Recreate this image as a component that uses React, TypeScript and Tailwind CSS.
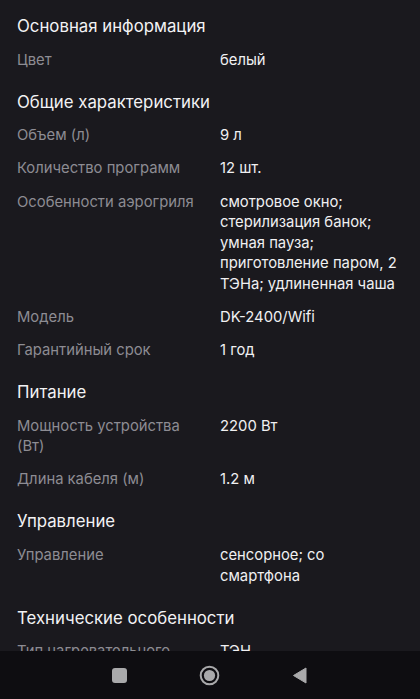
import React from "react";

type Row = { label: string[] | string; value: string[] | string };
type Section = { title: string; rows: Row[] };

const sections: Section[] = [
  { title: "Основная информация", rows: [{ label: "Цвет", value: "белый" }] },
  {
    title: "Общие характеристики",
    rows: [
      { label: "Объем (л)", value: "9 л" },
      { label: "Количество программ", value: "12 шт." },
      {
        label: "Особенности аэрогриля",
        value: [
          "смотровое окно;",
          "стерилизация банок;",
          "умная пауза;",
          "приготовление паром, 2",
          "ТЭНа; удлиненная чаша",
        ],
      },
      { label: "Модель", value: "DK-2400/Wifi" },
      { label: "Гарантийный срок", value: "1 год" },
    ],
  },
  {
    title: "Питание",
    rows: [
      { label: ["Мощность устройства", "(Вт)"], value: "2200 Вт" },
      { label: "Длина кабеля (м)", value: "1.2 м" },
    ],
  },
  {
    title: "Управление",
    rows: [{ label: "Управление", value: ["сенсорное; со", "смартфона"] }],
  },
  {
    title: "Технические особенности",
    rows: [{ label: "Тип нагревательного", value: "ТЭН" }],
  },
];

const lines = (v: string[] | string) => (Array.isArray(v) ? v : [v]);

export default function App() {
  return (
    <div
      className="h-[699px] w-[420px] flex flex-col overflow-hidden bg-[#1a191e]"
      style={{ fontFamily: "Inter, 'Noto Sans', sans-serif" }}
    >
      <div className="flex-1 overflow-hidden pt-[14px] px-[17px] flex flex-col gap-[19.4px]">
        {sections.map((s) => (
          <div key={s.title} className="flex flex-col">
            <div className="text-[16.8px] leading-[24px] text-[#f2f2f4]">{s.title}</div>
            <div className="mt-[11.7px] flex flex-col gap-[12.5px]">
              {s.rows.map((r, i) => (
                <div key={i} className="flex text-[14.8px] leading-[20.6px]">
                  <div className="w-[203px] shrink-0 text-[#8d8c93]">
                    {lines(r.label).map((l) => (
                      <div key={l}>{l}</div>
                    ))}
                  </div>
                  <div className="flex-1 text-[#f0f0f2]">
                    {lines(r.value).map((l) => (
                      <div key={l}>{l}</div>
                    ))}
                  </div>
                </div>
              ))}
            </div>
          </div>
        ))}
      </div>
      <div className="h-[48px] shrink-0 bg-[#0e0d11] flex items-center justify-center gap-[72px] pr-[2px]">
        <div className="w-[15px] h-[15px] rounded-[3px] bg-[#a9a9ab]" />
        <svg width="21" height="21" viewBox="0 0 21 21">
          <circle cx="10.5" cy="10.5" r="8.8" fill="none" stroke="#a9a9ab" strokeWidth="2" />
          <circle cx="10.5" cy="10.5" r="5.6" fill="#a9a9ab" />
        </svg>
        <svg width="15" height="17" viewBox="0 0 15 17">
          <path d="M14 1 L1.5 8.5 L14 16 Z" fill="#a9a9ab" stroke="#a9a9ab" strokeWidth="1" strokeLinejoin="round" />
        </svg>
      </div>
    </div>
  );
}
